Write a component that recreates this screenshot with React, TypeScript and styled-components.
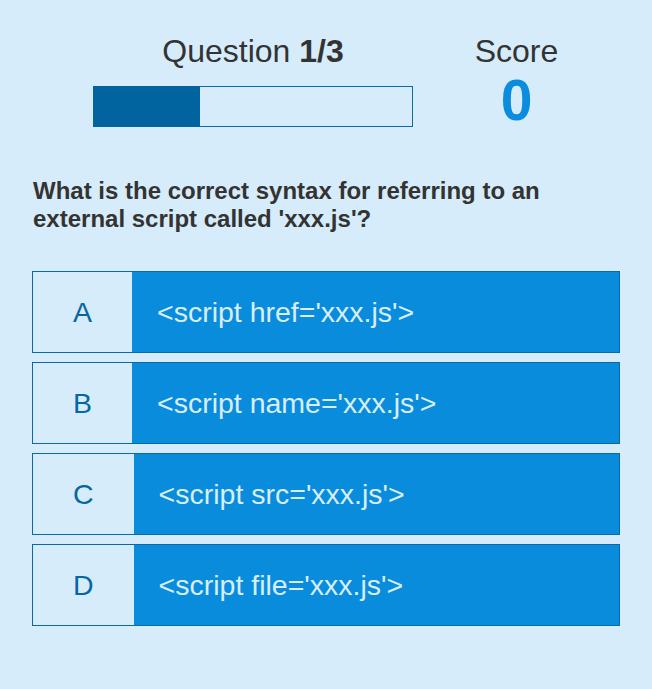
import React from "react";
import styled, { createGlobalStyle } from "styled-components";

const Global = createGlobalStyle`
  html, body { margin: 0; padding: 0; background: #d6ecfa; }
  body { font-family: "Liberation Sans", Arial, sans-serif; color: #333; }
`;

const Page = styled.div`
  width: 652px;
  min-height: 689px;
  box-sizing: border-box;
  padding: 33px 32px 0 32px;
`;

const Header = styled.div`
  display: flex;
  padding-left: 61px;
`;

const QuestionBlock = styled.div`
  width: 320px;
  display: flex;
  flex-direction: column;
  align-items: center;
`;

const Title = styled.div`
  font-size: 32px;
  line-height: 37px;
  color: #333;
  b { font-weight: 700; }
`;

const Bar = styled.div`
  margin-top: 16px;
  width: 320px;
  height: 41px;
  box-sizing: border-box;
  box-shadow: inset 0 0 0 1px #0a6aa5;
  display: flex;
`;

const Fill = styled.div`
  height: 100%;
  background: #02649e;
`;

const ScoreBlock = styled.div`
  flex: 1;
  display: flex;
  flex-direction: column;
  align-items: center;
`;

const ScoreValue = styled.div`
  font-size: 57px;
  font-weight: 700;
  line-height: 56px;
  color: #0a8ddf;
  margin-top: 2px;
`;

const QuestionText = styled.h2`
  margin: 49px 0 0 1px;
  font-size: 24px;
  line-height: 28px;
  font-weight: 700;
  color: #333;
`;

const Options = styled.div`
  margin-top: 38px;
  display: flex;
  flex-direction: column;
  gap: 9px;
`;

const Option = styled.div`
  display: flex;
  height: 82px;
  box-sizing: border-box;
  border: 1px solid #0a6aa5;
  background: #0a8cdc;
`;

const Letter = styled.div`
  background: #d6ecfa;
  color: #0567a3;
  font-size: 28.5px;
  padding: 0 40px;
  display: flex;
  align-items: center;
  justify-content: center;
`;

const Answer = styled.div`
  flex: 1;
  display: flex;
  align-items: center;
  padding-left: 25px;
  font-size: 28.5px;
  color: #d8eefb;
`;

const options = [
  ["A", "<script href='xxx.js'>"],
  ["B", "<script name='xxx.js'>"],
  ["C", "<script src='xxx.js'>"],
  ["D", "<script file='xxx.js'>"],
];

export default function App() {
  return (
    <>
      <Global />
      <Page>
        <Header>
          <QuestionBlock>
            <Title>
              Question <b>1/3</b>
            </Title>
            <Bar>
              <Fill style={{ width: `${(1 / 3) * 100}%` }} />
            </Bar>
          </QuestionBlock>
          <ScoreBlock>
            <Title>Score</Title>
            <ScoreValue>0</ScoreValue>
          </ScoreBlock>
        </Header>
        <QuestionText>
          What is the correct syntax for referring to an
          <br />
          external script called 'xxx.js'?
        </QuestionText>
        <Options>
          {options.map(([l, t]) => (
            <Option key={l}>
              <Letter>{l}</Letter>
              <Answer>{t}</Answer>
            </Option>
          ))}
        </Options>
      </Page>
    </>
  );
}
